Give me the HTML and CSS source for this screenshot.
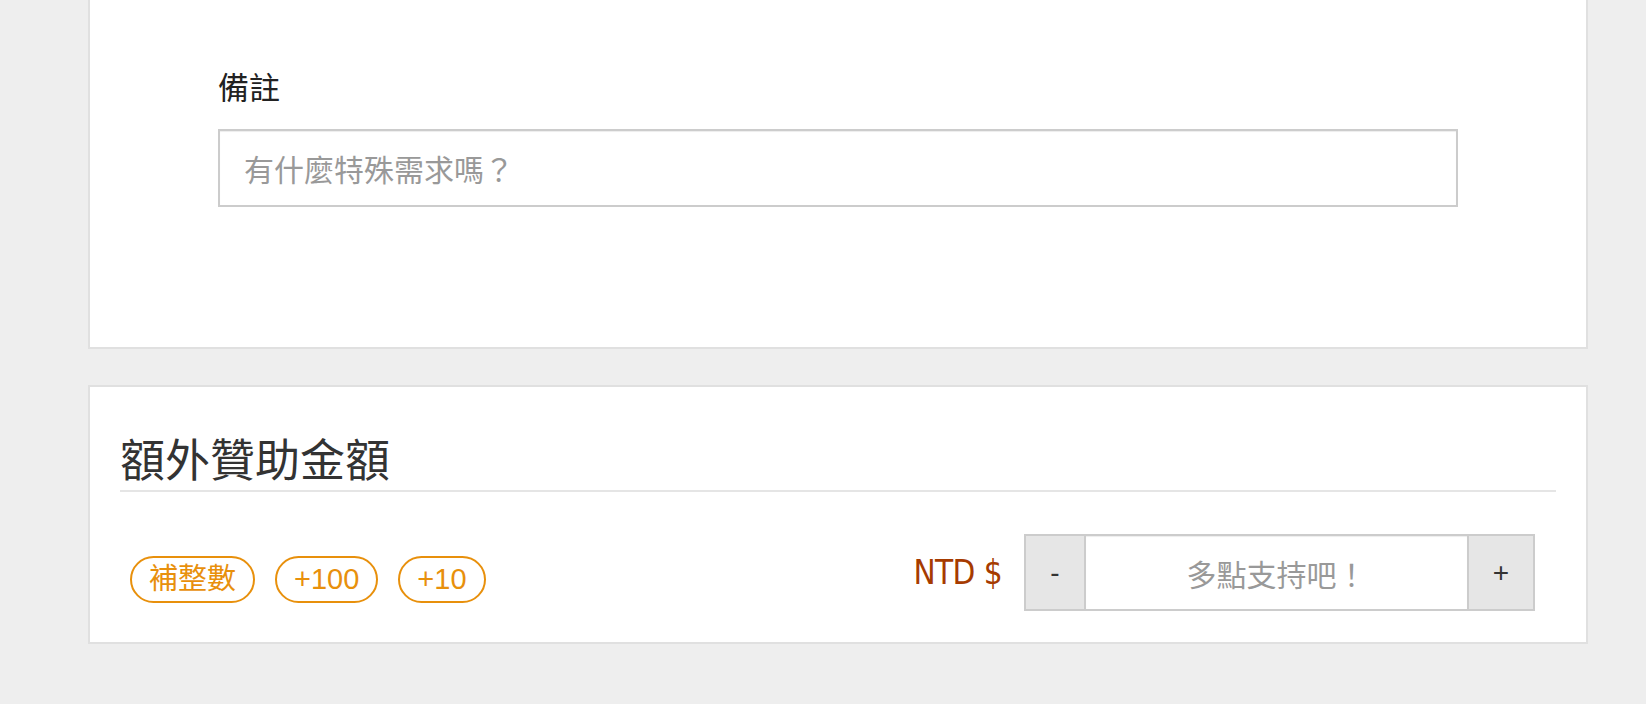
FILE: index.html
```html
<!DOCTYPE html>
<html lang="zh-Hant">
<head>
<meta charset="utf-8">
<title>贊助</title>
<link rel="stylesheet" href="styles.css">
</head>
<body>
<div class="page">
  <section class="card card-note">
    <label class="field-label" for="note">備註</label>
    <input id="note" class="note-input" type="text" placeholder="有什麼特殊需求嗎？">
  </section>
  <section class="card card-sponsor">
    <h2 class="card-title">額外贊助金額</h2>
    <div class="sponsor-row">
      <div class="quick-btns">
        <button class="pill" type="button">補整數</button>
        <button class="pill" type="button">+100</button>
        <button class="pill" type="button">+10</button>
      </div>
      <div class="amount">
        <span class="currency">NTD $</span>
        <div class="stepper">
          <button class="step-btn minus" type="button">-</button>
          <input class="step-input" type="text" placeholder="多點支持吧！">
          <button class="step-btn plus" type="button">+</button>
        </div>
      </div>
    </div>
  </section>
</div>
</body>
</html>
```
FILE: styles.css
```css
html, body {
  margin: 0;
  padding: 0;
  background: #eeeeee;
  font-family: "Liberation Sans", "Noto Sans CJK TC", sans-serif;
}

.page {
  padding: 0 58px 0 88px;
}

.card {
  background: #ffffff;
  border: 2px solid #e0e0e0;
}

.card-note {
  border-top: none;
  padding: 63px 128px 140px;
}

.field-label {
  display: block;
  font-family: "Noto Sans CJK TC", sans-serif;
  font-size: 31px;
  line-height: 46px;
  color: #222222;
  margin-bottom: 20px;
}

.note-input {
  display: block;
  width: 100%;
  box-sizing: border-box;
  height: 78px;
  margin: 0;
  border: 2px solid #cccccc;
  padding: 0 24px;
  font-family: "Noto Sans CJK TC", sans-serif;
  font-size: 30px;
  color: #333333;
  background: #ffffff;
  box-shadow: inset 0 1px 1px rgba(0, 0, 0, 0.075);
  outline: none;
}

.note-input::placeholder,
.step-input::placeholder {
  color: #999999;
}

.card-sponsor {
  margin-top: 36px;
  padding: 0 30px 31px;
}

.card-title {
  margin: 0;
  padding: 45px 0 6px;
  font-family: "Noto Sans CJK TC", sans-serif;
  font-size: 45px;
  line-height: 52px;
  font-weight: normal;
  color: #333333;
  border-bottom: 2px solid #e5e5e5;
}

.sponsor-row {
  display: flex;
  justify-content: space-between;
  align-items: flex-start;
  padding: 42px 21px 0 10px;
}

.quick-btns {
  display: flex;
  gap: 20px;
  margin-top: 22px;
}

.pill {
  height: 47px;
  box-sizing: border-box;
  margin: 0;
  padding: 0 17px;
  border: 2px solid #e8900c;
  border-radius: 24px;
  background: #ffffff;
  color: #e8900c;
  font-family: "Liberation Sans", "Noto Sans CJK TC", sans-serif;
  font-size: 29px;
  line-height: 41px;
}

.pill-cjk {
  font-size: 28px;
}

.amount {
  display: flex;
  align-items: center;
  gap: 22px;
}

.currency {
  font-family: "Liberation Sans Narrow", "DejaVu Sans Condensed", "Liberation Sans", sans-serif;
  font-size: 33px;
  letter-spacing: -0.6px;
  color: #a63b00;
}

.stepper {
  display: flex;
  height: 77px;
}

.step-btn {
  box-sizing: border-box;
  height: 100%;
  margin: 0;
  padding: 0;
  border: 2px solid #cccccc;
  background: #e6e6e6;
  color: #333333;
  font-family: "Liberation Sans", sans-serif;
  font-size: 28px;
}

.minus {
  width: 62px;
}

.plus {
  width: 68px;
}

.step-input {
  box-sizing: border-box;
  width: 381px;
  height: 100%;
  margin: 0;
  padding: 0 10px;
  border: 2px solid #cccccc;
  border-left: none;
  border-right: none;
  text-align: center;
  font-family: "Noto Sans CJK TC", sans-serif;
  font-size: 30px;
  color: #333333;
  background: #ffffff;
  box-shadow: inset 0 1px 1px rgba(0, 0, 0, 0.075);
  outline: none;
}
```
